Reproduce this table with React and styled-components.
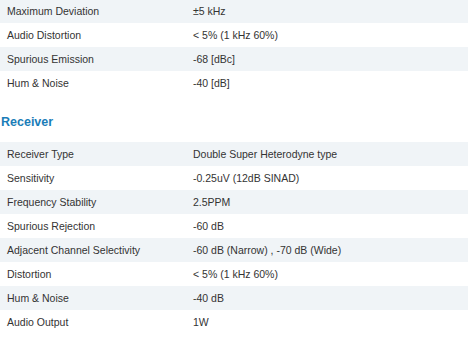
import React from "react";
import styled, { createGlobalStyle } from "styled-components";

const GlobalStyle = createGlobalStyle`
  html, body {
    margin: 0;
    padding: 0;
    background: #ffffff;
  }
  body {
    font-family: "Liberation Sans", Arial, Helvetica, sans-serif;
    color: #333333;
  }
`;

const Page = styled.div`
  width: 468px;
  margin-top: -1px;
`;

const SpecTable = styled.table`
  width: 100%;
  border-collapse: collapse;
  font-size: 10.5px;
`;

const Row = styled.tr`
  height: 24px;
  background: ${(props) => (props.shaded ? "#f0f4f7" : "#ffffff")};
`;

const Label = styled.td`
  width: 186px;
  padding: 0 0 0 7px;
  vertical-align: middle;
`;

const Value = styled.td`
  padding: 0;
  vertical-align: middle;
`;

const SectionTitle = styled.h3`
  margin: 19px 0 12px 1px;
  font-size: 12.5px;
  line-height: 16px;
  font-weight: bold;
  color: #1a7db8;
`;

const transmitter = [
  ["Maximum Deviation", "±5 kHz"],
  ["Audio Distortion", "< 5% (1 kHz 60%)"],
  ["Spurious Emission", "-68 [dBc]"],
  ["Hum & Noise", "-40 [dB]"],
];

const receiver = [
  ["Receiver Type", "Double Super Heterodyne type"],
  ["Sensitivity", "-0.25uV (12dB SINAD)"],
  ["Frequency Stability", "2.5PPM"],
  ["Spurious Rejection", "-60 dB"],
  ["Adjacent Channel Selectivity", "-60 dB (Narrow) , -70 dB (Wide)"],
  ["Distortion", "< 5% (1 kHz 60%)"],
  ["Hum & Noise", "-40 dB"],
  ["Audio Output", "1W"],
];

const Specs = ({ rows }) => (
  <SpecTable>
    <tbody>
      {rows.map(([label, value], index) => (
        <Row key={label} shaded={index % 2 === 0}>
          <Label>{label}</Label>
          <Value>{value}</Value>
        </Row>
      ))}
    </tbody>
  </SpecTable>
);

const App = () => (
  <>
    <GlobalStyle />
    <Page>
      <Specs rows={transmitter} />
      <SectionTitle>Receiver</SectionTitle>
      <Specs rows={receiver} />
    </Page>
  </>
);

export default App;
